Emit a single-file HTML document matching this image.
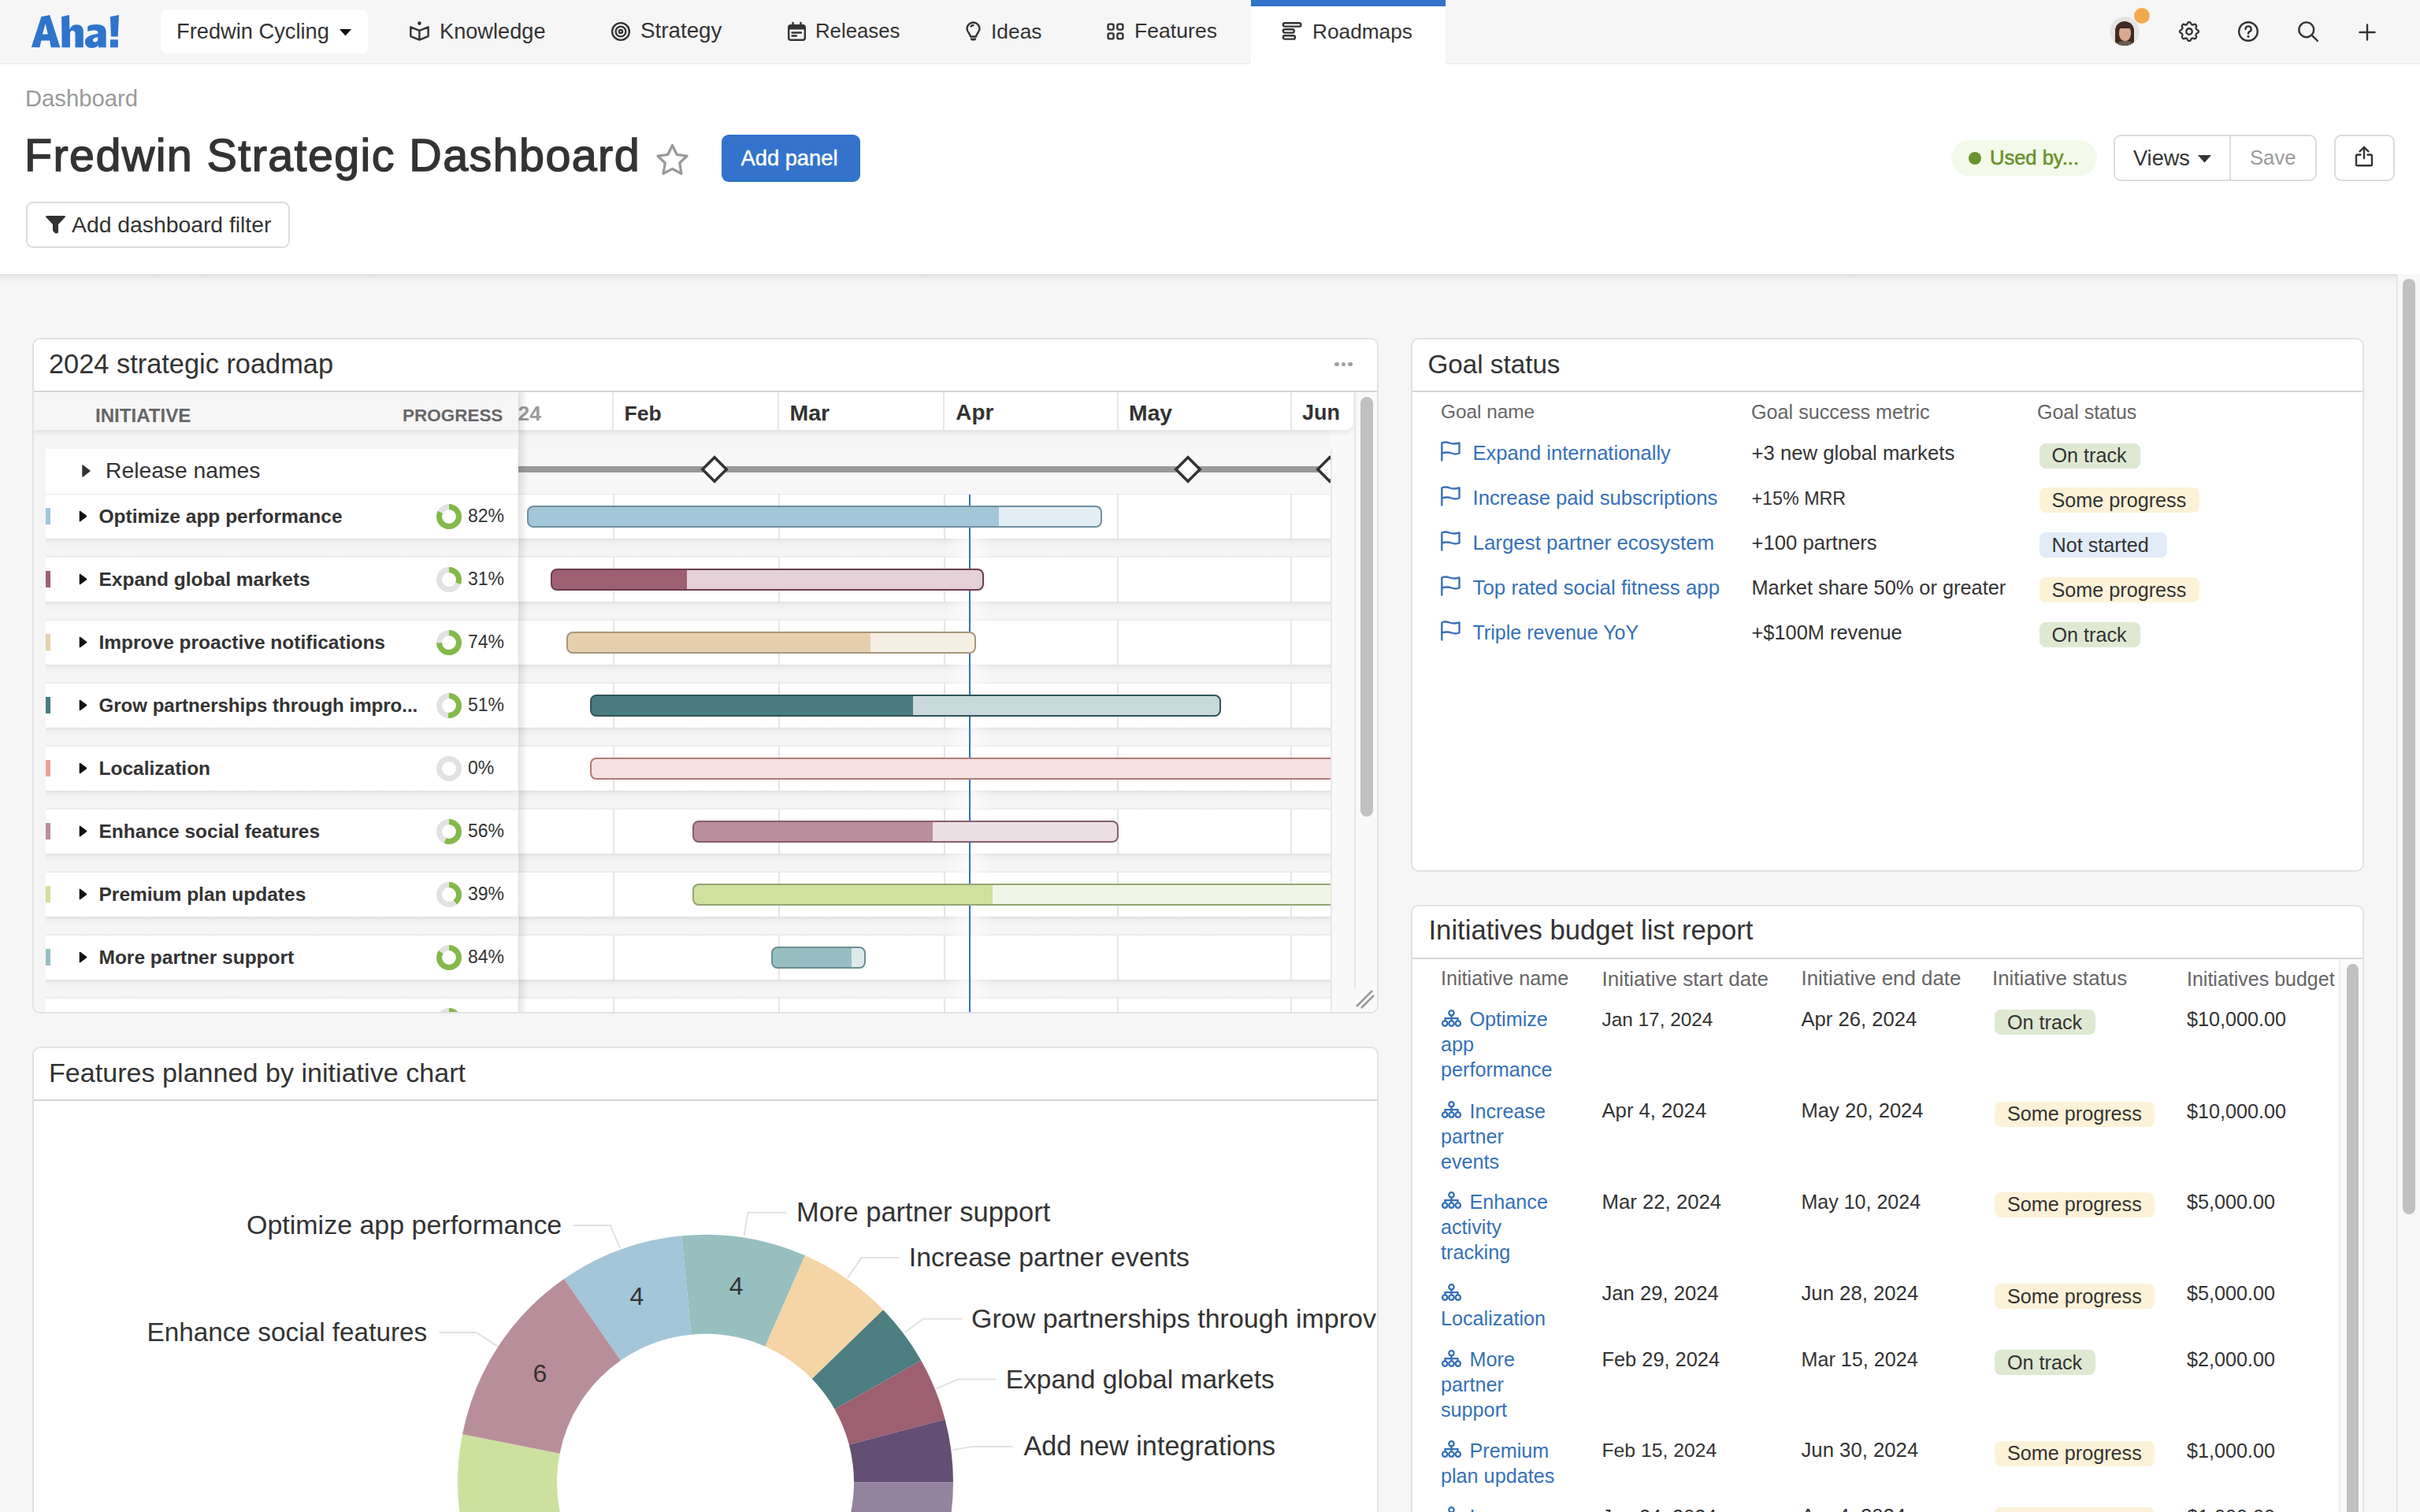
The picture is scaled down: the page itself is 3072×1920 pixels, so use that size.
<!DOCTYPE html>
<html><head><meta charset="utf-8"><title>Fredwin Strategic Dashboard</title>
<style>
html,body{margin:0;padding:0}
body{width:3072px;height:1920px;overflow:hidden;position:relative;background:#f6f6f6;font-family:'Liberation Sans', sans-serif;color:#333}
.a{position:absolute;box-sizing:border-box}
.t{position:absolute;white-space:nowrap;line-height:1}
.clip{position:absolute;overflow:hidden}
svg{position:absolute;overflow:visible}
</style></head><body>
<div class="a" style="left:0;top:0;width:3072px;height:81px;background:#f6f6f6;border-bottom:1px solid #ececec"></div>
<svg style="left:0;top:0" width="170" height="70" viewBox="0 0 170 70"><path fill="#2f74cc" fill-rule="evenodd" d="M39.8 60 L52.4 21.2 L63.2 19 L76.4 60.2 L64.8 60.2 L63 51.4 L52.4 51.4 L50.4 60.2 Z M53.9 43.4 L57.6 30.2 L60.8 43.4 Z M78.1 21.2 L88 19 L88.3 37.6 C90.2 33.2 93.2 31.2 97.2 31.2 C102.5 31.2 105.8 34.5 105.8 39.5 L105.8 60.3 L95.5 60.3 L95.5 43.2 C95.5 40.6 94.2 38.8 92.2 38.8 C90.2 38.8 88.9 40.4 88.9 43 L88.9 60.2 L78.6 60.2 Z M111.2 33.4 C114.3 31.9 118.4 31.1 122.4 31.1 C130.2 31.1 134.6 34.2 134.6 40.2 L134.6 60.3 L124.9 60.3 L124.9 57.5 C123 59.8 120.2 60.9 116.6 60.9 C111.2 60.9 108 57.7 108 53.2 C108 47.2 113.2 44.6 124.3 42.8 L124.3 41.4 C124.3 39.4 123 38.5 120.4 38.5 C117.2 38.5 114.2 39.1 111.2 39.9 Z M124.3 47.2 C119.8 47.9 117.9 49 117.9 51.1 C117.9 52.6 118.9 53.4 120.4 53.4 C122.6 53.4 124.3 52 124.3 49.8 Z M139.9 21.2 L151 19 L149.7 46.5 L141 46.5 Z M140 50.2 H149.8 V60.3 H140 Z"/></svg>
<div class="a" style="left:204px;top:12px;width:263px;height:56px;background:#fff;border-radius:8px"></div>
<div class="t" style="left:224.0px;top:26.11px;font-size:27.27px;font-weight:400;color:#333;">Fredwin Cycling</div>
<svg style="left:431px;top:37px" width="15" height="9" viewBox="0 0 15 9"><path d="M0 0H15L7.5 8.5Z" fill="#111"/></svg>
<svg style="left:520px;top:27px" width="25" height="25" viewBox="0 0 25 25"><circle cx="12.4" cy="2.6" r="2.3" fill="#333"/><path d="M1.3 7.3 L12.4 11.8 L23.6 7.3 V19.1 L12.4 23.6 L1.3 19.1 Z M12.4 11.8 V23.6" fill="none" stroke="#333" stroke-width="2.4" stroke-linecap="round" stroke-linejoin="round" stroke-width="2.3"/></svg>
<div class="t" style="left:558.0px;top:25.97px;font-size:27.20px;font-weight:400;color:#333;">Knowledge</div>
<svg style="left:776px;top:28px" width="24" height="24" viewBox="0 0 24 24"><circle cx="12" cy="12" r="10.9" fill="none" stroke="#333" stroke-width="2.4" stroke-linecap="round" stroke-linejoin="round" stroke-width="2.2"/><circle cx="12" cy="12" r="6.4" fill="none" stroke="#333" stroke-width="2.4" stroke-linecap="round" stroke-linejoin="round" stroke-width="2.2"/><circle cx="12" cy="12" r="2.1" fill="none" stroke="#333" stroke-width="2.4" stroke-linecap="round" stroke-linejoin="round" stroke-width="2"/></svg>
<div class="t" style="left:813.0px;top:25.47px;font-size:27.79px;font-weight:400;color:#333;">Strategy</div>
<svg style="left:1000px;top:28px" width="23" height="24" viewBox="0 0 23 24"><path d="M6.5 1V5 M16.5 1V5" fill="none" stroke="#333" stroke-width="2.4" stroke-linecap="round" stroke-linejoin="round"/><rect x="1.2" y="4.2" width="20.6" height="18.6" rx="2.5" fill="none" stroke="#333" stroke-width="2.4" stroke-linecap="round" stroke-linejoin="round"/><path d="M1.2 6.5 Q1.2 4.2 3.7 4.2 H19.3 Q21.8 4.2 21.8 6.7 V9.5 H1.2Z" fill="#333"/><path d="M5.5 13.5H17 M5.5 17.5H11" fill="none" stroke="#333" stroke-width="2.4" stroke-linecap="round" stroke-linejoin="round"/></svg>
<div class="t" style="left:1035.0px;top:27.17px;font-size:25.79px;font-weight:400;color:#333;">Releases</div>
<svg style="left:1226px;top:28px" width="19" height="24" viewBox="0 0 19 24"><path d="M6 18.5 C6 15 1.5 13 1.5 8.5 A8 8 0 0 1 17.5 8.5 C17.5 13 13 15 13 18.5 Z" fill="none" stroke="#333" stroke-width="2.4" stroke-linecap="round" stroke-linejoin="round"/><path d="M6 20.5H13 V21.5 Q13 23.5 11 23.5 H8 Q6 23.5 6 21.5Z" fill="#333"/><path d="M6.5 5.5 Q8 4 9.5 4" fill="none" stroke="#333" stroke-width="2.4" stroke-linecap="round" stroke-linejoin="round" stroke-width="1.8"/></svg>
<div class="t" style="left:1258.0px;top:26.68px;font-size:26.37px;font-weight:400;color:#333;">Ideas</div>
<svg style="left:1405px;top:29px" width="23" height="23" viewBox="0 0 23 23"><rect x="1.6" y="1.6" width="7" height="7" rx="1.8" fill="none" stroke="#333" stroke-width="2.4" stroke-linecap="round" stroke-linejoin="round" stroke-width="2.2"/><rect x="13.4" y="1.6" width="7" height="7" rx="1.8" fill="none" stroke="#333" stroke-width="2.4" stroke-linecap="round" stroke-linejoin="round" stroke-width="2.2"/><rect x="1.6" y="13.4" width="7" height="7" rx="1.8" fill="none" stroke="#333" stroke-width="2.4" stroke-linecap="round" stroke-linejoin="round" stroke-width="2.2"/><rect x="13.4" y="13.4" width="7" height="7" rx="1.8" fill="none" stroke="#333" stroke-width="2.4" stroke-linecap="round" stroke-linejoin="round" stroke-width="2.2"/></svg>
<div class="t" style="left:1440.0px;top:26.48px;font-size:26.61px;font-weight:400;color:#333;">Features</div>
<div class="a" style="left:1588px;top:0;width:247px;height:82px;background:#fff"></div>
<div class="a" style="left:1588px;top:0;width:247px;height:8px;background:#3073c9"></div>
<svg style="left:1627px;top:27px" width="26" height="25" viewBox="0 0 26 25"><rect x="1.8" y="2.2" width="22.6" height="4.4" rx="2.2" fill="none" stroke="#333" stroke-width="2.4" stroke-linecap="round" stroke-linejoin="round" stroke-width="2.2"/><rect x="1.8" y="10.2" width="14" height="4.4" rx="2.2" fill="none" stroke="#333" stroke-width="2.4" stroke-linecap="round" stroke-linejoin="round" stroke-width="2.2"/><rect x="1.8" y="18.2" width="15.2" height="4.4" rx="2.2" fill="none" stroke="#333" stroke-width="2.4" stroke-linecap="round" stroke-linejoin="round" stroke-width="2.2"/></svg>
<div class="t" style="left:1666.0px;top:26.77px;font-size:26.26px;font-weight:400;color:#333;">Roadmaps</div>
<div class="a" style="left:2679px;top:22px;width:36px;height:36px;border-radius:50%;overflow:hidden;background:#e6e4e0;box-shadow:0 0 0 1px #e8e8e8"><div class="a" style="left:6px;top:5px;width:24px;height:34px;border-radius:12px 12px 4px 4px;background:#3d2b22"></div><div class="a" style="left:11px;top:10px;width:15px;height:20px;border-radius:48% 48% 45% 45%;background:#d9a88f"></div><div class="a" style="left:10px;top:7px;width:17px;height:7px;border-radius:8px 8px 2px 6px;background:#3d2b22"></div><div class="a" style="left:6px;top:30px;width:26px;height:10px;border-radius:10px 10px 0 0;background:#6b5a50"></div></div>
<div class="a" style="left:2709px;top:10px;width:20px;height:20px;border-radius:50%;background:#f2a94e"></div>
<svg style="left:2763px;top:24px" width="32" height="32" viewBox="0 0 24 24"><path d="M10.325 4.317c.426-1.756 2.924-1.756 3.35 0a1.724 1.724 0 0 0 2.573 1.066c1.543-.94 3.31.826 2.37 2.37a1.724 1.724 0 0 0 1.065 2.572c1.756.426 1.756 2.924 0 3.35a1.724 1.724 0 0 0-1.066 2.573c.94 1.543-.826 3.31-2.37 2.37a1.724 1.724 0 0 0-2.572 1.065c-.426 1.756-2.924 1.756-3.35 0a1.724 1.724 0 0 0-2.573-1.066c-1.543.94-3.31-.826-2.37-2.37a1.724 1.724 0 0 0-1.065-2.572c-1.756-.426-1.756-2.924 0-3.35a1.724 1.724 0 0 0 1.066-2.573c-.94-1.543.826-3.31 2.37-2.37c1 .608 2.296.07 2.572-1.065z" fill="none" stroke="#333" stroke-width="1.75" stroke-linecap="round" stroke-linejoin="round"/><circle cx="12" cy="12" r="2.8" fill="none" stroke="#333" stroke-width="1.75"/></svg>
<svg style="left:2841px;top:27px" width="26" height="26" viewBox="0 0 26 26"><circle cx="13" cy="13" r="11.8" fill="none" stroke="#333" stroke-width="2.4" stroke-linecap="round" stroke-linejoin="round"/><path d="M9.5 10 A3.6 3.6 0 1 1 14.2 13.4 Q13 14 13 15.6" fill="none" stroke="#333" stroke-width="2.4" stroke-linecap="round" stroke-linejoin="round"/><circle cx="13" cy="19.3" r="1.5" fill="#333"/></svg>
<svg style="left:2917px;top:27px" width="27" height="27" viewBox="0 0 27 27"><circle cx="10.8" cy="10.8" r="9.4" fill="none" stroke="#333" stroke-width="2.4" stroke-linecap="round" stroke-linejoin="round"/><path d="M17.8 17.8 L25 25" fill="none" stroke="#333" stroke-width="2.4" stroke-linecap="round" stroke-linejoin="round"/></svg>
<svg style="left:2994px;top:30px" width="22" height="22" viewBox="0 0 22 22"><path d="M11 1.5V20.5 M1.5 11H20.5" fill="none" stroke="#333" stroke-width="2.4" stroke-linecap="round" stroke-linejoin="round"/></svg>
<div class="a" style="left:0;top:82px;width:3072px;height:266px;background:#fff"></div>
<div class="a" style="left:0;top:348px;width:3072px;height:14px;background:linear-gradient(#dedede,#efefef 40%,#f6f6f6)"></div>
<div class="t" style="left:32.0px;top:111.06px;font-size:29.23px;font-weight:400;color:#9a9a9a;">Dashboard</div>
<div class="t" style="left:31.0px;top:168.83px;font-size:57.50px;font-weight:400;color:#333;-webkit-text-stroke:1.4px #333;letter-spacing:1.383px">Fredwin Strategic Dashboard</div>
<svg style="left:832px;top:182px" width="43" height="42" viewBox="0 0 43 42"><path d="M21.5 2.5 L27.2 14.3 L40 16 L30.7 25 L33 38.5 L21.5 32.3 L10 38.5 L12.3 25 L3 16 L15.8 14.3 Z" fill="none" stroke="#999" stroke-width="3.2" stroke-linejoin="round"/></svg>
<div class="a" style="left:916px;top:171px;width:176px;height:60px;background:#3373cc;border-radius:9px"></div>
<div class="t" style="left:940.5px;top:187.48px;font-size:27.31px;font-weight:400;color:#fff;-webkit-text-stroke:0.5px #fff">Add panel</div>
<div class="a" style="left:33px;top:256px;width:335px;height:59px;border:2px solid #dcdcdc;border-radius:9px;background:#fff"></div>
<svg style="left:57px;top:274px" width="27" height="23" viewBox="0 0 27 23"><path d="M1 1.5 Q0.5 0 2.5 0 H24.5 Q26.5 0 26 1.5 L17 11 V20.5 Q17 22.5 15 22.5 Q12.5 22.5 12 21 L10.5 19.5 Q10 19 10 18 V11 Z" fill="#333"/></svg>
<div class="t" style="left:91.0px;top:270.82px;font-size:28.32px;font-weight:400;color:#333;">Add dashboard filter</div>
<div class="a" style="left:2477px;top:178px;width:185px;height:46px;border-radius:23px;background:#f4faea"></div>
<div class="a" style="left:2499px;top:193px;width:16px;height:16px;border-radius:50%;background:#6a922e"></div>
<div class="t" style="left:2526.0px;top:187.90px;font-size:25.52px;font-weight:400;color:#6a922e;-webkit-text-stroke:0.6px #6a922e">Used by...</div>
<div class="a" style="left:2683px;top:171px;width:258px;height:59px;border:2px solid #dcdcdc;border-radius:9px;background:#fff"></div>
<div class="a" style="left:2830px;top:172px;width:2px;height:57px;background:#dcdcdc"></div>
<div class="t" style="left:2708.0px;top:187.00px;font-size:27.17px;font-weight:400;color:#333;">Views</div>
<svg style="left:2790px;top:197px" width="17" height="10" viewBox="0 0 17 10"><path d="M0 0H17L8.5 9.5Z" fill="#333"/></svg>
<div class="t" style="left:2856.0px;top:188.27px;font-size:25.66px;font-weight:400;color:#9a9a9a;">Save</div>
<div class="a" style="left:2963px;top:171px;width:77px;height:59px;border:2px solid #dcdcdc;border-radius:9px;background:#fff"></div>
<svg style="left:2989px;top:185px" width="24" height="27" viewBox="0 0 24 27"><path d="M12 2V16 M6.5 7.3 L12 1.8 L17.5 7.3 M7.5 11.5 H3.5 Q2 11.5 2 13 V23.8 Q2 25.2 3.5 25.2 H20.5 Q22 25.2 22 23.8 V13 Q22 11.5 20.5 11.5 H16.5" fill="none" stroke="#333" stroke-width="2.4" stroke-linecap="round" stroke-linejoin="round" stroke-width="2.5"/></svg>
<div class="a" style="left:3042px;top:348px;width:30px;height:1572px;background:#f8f8f8;border-left:2px solid #e6e6e6"></div>
<div class="a" style="left:3050px;top:354px;width:16px;height:1188px;background:#c1c1c1;border-radius:8px"></div>
<div class="a" style="left:41px;top:429px;width:1709px;height:858px;background:#fff;border:2px solid #e2e2e2;border-radius:10px"></div>
<div class="t" style="left:62.0px;top:445.41px;font-size:34.36px;font-weight:400;color:#333;">2024 strategic roadmap</div>
<div class="a" style="left:1694.4px;top:460px;width:5.2px;height:5.2px;border-radius:50%;background:#a0a0a0"></div>
<div class="a" style="left:1702.9px;top:460px;width:5.2px;height:5.2px;border-radius:50%;background:#a0a0a0"></div>
<div class="a" style="left:1711.4px;top:460px;width:5.2px;height:5.2px;border-radius:50%;background:#a0a0a0"></div>
<div class="a" style="left:43px;top:496px;width:1705px;height:2px;background:#d6d6d6"></div>
<div class="clip" style="left:43px;top:498px;width:1705px;height:787px;border-radius:0 0 8px 8px">
<div class="a" style="left:0.0px;top:0.0px;width:1646.0px;height:802.0px;background:#f5f5f5"></div>
<div class="a" style="left:1646.0px;top:0.0px;width:61.0px;height:802.0px;background:#f9f9f9"></div>
<div class="a" style="left:615.0px;top:130.0px;width:1031.0px;height:56.0px;background:#fff"></div>
<div class="a" style="left:615.0px;top:186.0px;width:1031.0px;height:24.0px;background:linear-gradient(#dedede 0,#e9e9e9 2px,#f1f1f1 6px,#f5f5f5 12px,#f5f5f5 21px,#ededed 23px,#e6e6e6 24px)"></div>
<div class="a" style="left:735.3px;top:130.0px;width:2.0px;height:56.0px;background:#e6e6e6"></div>
<div class="a" style="left:945.3px;top:130.0px;width:2.0px;height:56.0px;background:#e6e6e6"></div>
<div class="a" style="left:1155.3px;top:130.0px;width:2.0px;height:56.0px;background:#e6e6e6"></div>
<div class="a" style="left:1375.3px;top:130.0px;width:2.0px;height:56.0px;background:#e6e6e6"></div>
<div class="a" style="left:1595.3px;top:130.0px;width:2.0px;height:56.0px;background:#e6e6e6"></div>
<div class="a" style="left:615.0px;top:210.0px;width:1031.0px;height:56.0px;background:#fff"></div>
<div class="a" style="left:615.0px;top:266.0px;width:1031.0px;height:24.0px;background:linear-gradient(#dedede 0,#e9e9e9 2px,#f1f1f1 6px,#f5f5f5 12px,#f5f5f5 21px,#ededed 23px,#e6e6e6 24px)"></div>
<div class="a" style="left:735.3px;top:210.0px;width:2.0px;height:56.0px;background:#e6e6e6"></div>
<div class="a" style="left:945.3px;top:210.0px;width:2.0px;height:56.0px;background:#e6e6e6"></div>
<div class="a" style="left:1155.3px;top:210.0px;width:2.0px;height:56.0px;background:#e6e6e6"></div>
<div class="a" style="left:1375.3px;top:210.0px;width:2.0px;height:56.0px;background:#e6e6e6"></div>
<div class="a" style="left:1595.3px;top:210.0px;width:2.0px;height:56.0px;background:#e6e6e6"></div>
<div class="a" style="left:615.0px;top:290.0px;width:1031.0px;height:56.0px;background:#fff"></div>
<div class="a" style="left:615.0px;top:346.0px;width:1031.0px;height:24.0px;background:linear-gradient(#dedede 0,#e9e9e9 2px,#f1f1f1 6px,#f5f5f5 12px,#f5f5f5 21px,#ededed 23px,#e6e6e6 24px)"></div>
<div class="a" style="left:735.3px;top:290.0px;width:2.0px;height:56.0px;background:#e6e6e6"></div>
<div class="a" style="left:945.3px;top:290.0px;width:2.0px;height:56.0px;background:#e6e6e6"></div>
<div class="a" style="left:1155.3px;top:290.0px;width:2.0px;height:56.0px;background:#e6e6e6"></div>
<div class="a" style="left:1375.3px;top:290.0px;width:2.0px;height:56.0px;background:#e6e6e6"></div>
<div class="a" style="left:1595.3px;top:290.0px;width:2.0px;height:56.0px;background:#e6e6e6"></div>
<div class="a" style="left:615.0px;top:370.0px;width:1031.0px;height:56.0px;background:#fff"></div>
<div class="a" style="left:615.0px;top:426.0px;width:1031.0px;height:24.0px;background:linear-gradient(#dedede 0,#e9e9e9 2px,#f1f1f1 6px,#f5f5f5 12px,#f5f5f5 21px,#ededed 23px,#e6e6e6 24px)"></div>
<div class="a" style="left:735.3px;top:370.0px;width:2.0px;height:56.0px;background:#e6e6e6"></div>
<div class="a" style="left:945.3px;top:370.0px;width:2.0px;height:56.0px;background:#e6e6e6"></div>
<div class="a" style="left:1155.3px;top:370.0px;width:2.0px;height:56.0px;background:#e6e6e6"></div>
<div class="a" style="left:1375.3px;top:370.0px;width:2.0px;height:56.0px;background:#e6e6e6"></div>
<div class="a" style="left:1595.3px;top:370.0px;width:2.0px;height:56.0px;background:#e6e6e6"></div>
<div class="a" style="left:615.0px;top:450.0px;width:1031.0px;height:56.0px;background:#fff"></div>
<div class="a" style="left:615.0px;top:506.0px;width:1031.0px;height:24.0px;background:linear-gradient(#dedede 0,#e9e9e9 2px,#f1f1f1 6px,#f5f5f5 12px,#f5f5f5 21px,#ededed 23px,#e6e6e6 24px)"></div>
<div class="a" style="left:735.3px;top:450.0px;width:2.0px;height:56.0px;background:#e6e6e6"></div>
<div class="a" style="left:945.3px;top:450.0px;width:2.0px;height:56.0px;background:#e6e6e6"></div>
<div class="a" style="left:1155.3px;top:450.0px;width:2.0px;height:56.0px;background:#e6e6e6"></div>
<div class="a" style="left:1375.3px;top:450.0px;width:2.0px;height:56.0px;background:#e6e6e6"></div>
<div class="a" style="left:1595.3px;top:450.0px;width:2.0px;height:56.0px;background:#e6e6e6"></div>
<div class="a" style="left:615.0px;top:530.0px;width:1031.0px;height:56.0px;background:#fff"></div>
<div class="a" style="left:615.0px;top:586.0px;width:1031.0px;height:24.0px;background:linear-gradient(#dedede 0,#e9e9e9 2px,#f1f1f1 6px,#f5f5f5 12px,#f5f5f5 21px,#ededed 23px,#e6e6e6 24px)"></div>
<div class="a" style="left:735.3px;top:530.0px;width:2.0px;height:56.0px;background:#e6e6e6"></div>
<div class="a" style="left:945.3px;top:530.0px;width:2.0px;height:56.0px;background:#e6e6e6"></div>
<div class="a" style="left:1155.3px;top:530.0px;width:2.0px;height:56.0px;background:#e6e6e6"></div>
<div class="a" style="left:1375.3px;top:530.0px;width:2.0px;height:56.0px;background:#e6e6e6"></div>
<div class="a" style="left:1595.3px;top:530.0px;width:2.0px;height:56.0px;background:#e6e6e6"></div>
<div class="a" style="left:615.0px;top:610.0px;width:1031.0px;height:56.0px;background:#fff"></div>
<div class="a" style="left:615.0px;top:666.0px;width:1031.0px;height:24.0px;background:linear-gradient(#dedede 0,#e9e9e9 2px,#f1f1f1 6px,#f5f5f5 12px,#f5f5f5 21px,#ededed 23px,#e6e6e6 24px)"></div>
<div class="a" style="left:735.3px;top:610.0px;width:2.0px;height:56.0px;background:#e6e6e6"></div>
<div class="a" style="left:945.3px;top:610.0px;width:2.0px;height:56.0px;background:#e6e6e6"></div>
<div class="a" style="left:1155.3px;top:610.0px;width:2.0px;height:56.0px;background:#e6e6e6"></div>
<div class="a" style="left:1375.3px;top:610.0px;width:2.0px;height:56.0px;background:#e6e6e6"></div>
<div class="a" style="left:1595.3px;top:610.0px;width:2.0px;height:56.0px;background:#e6e6e6"></div>
<div class="a" style="left:615.0px;top:690.0px;width:1031.0px;height:56.0px;background:#fff"></div>
<div class="a" style="left:615.0px;top:746.0px;width:1031.0px;height:24.0px;background:linear-gradient(#dedede 0,#e9e9e9 2px,#f1f1f1 6px,#f5f5f5 12px,#f5f5f5 21px,#ededed 23px,#e6e6e6 24px)"></div>
<div class="a" style="left:735.3px;top:690.0px;width:2.0px;height:56.0px;background:#e6e6e6"></div>
<div class="a" style="left:945.3px;top:690.0px;width:2.0px;height:56.0px;background:#e6e6e6"></div>
<div class="a" style="left:1155.3px;top:690.0px;width:2.0px;height:56.0px;background:#e6e6e6"></div>
<div class="a" style="left:1375.3px;top:690.0px;width:2.0px;height:56.0px;background:#e6e6e6"></div>
<div class="a" style="left:1595.3px;top:690.0px;width:2.0px;height:56.0px;background:#e6e6e6"></div>
<div class="a" style="left:615.0px;top:770.0px;width:1031.0px;height:56.0px;background:#fff"></div>
<div class="a" style="left:615.0px;top:826.0px;width:1031.0px;height:24.0px;background:linear-gradient(#dedede 0,#e9e9e9 2px,#f1f1f1 6px,#f5f5f5 12px,#f5f5f5 21px,#ededed 23px,#e6e6e6 24px)"></div>
<div class="a" style="left:735.3px;top:770.0px;width:2.0px;height:56.0px;background:#e6e6e6"></div>
<div class="a" style="left:945.3px;top:770.0px;width:2.0px;height:56.0px;background:#e6e6e6"></div>
<div class="a" style="left:1155.3px;top:770.0px;width:2.0px;height:56.0px;background:#e6e6e6"></div>
<div class="a" style="left:1375.3px;top:770.0px;width:2.0px;height:56.0px;background:#e6e6e6"></div>
<div class="a" style="left:1595.3px;top:770.0px;width:2.0px;height:56.0px;background:#e6e6e6"></div>
<div class="a" style="left:615.0px;top:72.0px;width:1031.0px;height:56.5px;background:#f7f7f7"></div>
<div class="a" style="left:15.0px;top:128.5px;width:1631.0px;height:1.5px;background:#e8e8e8"></div>
<div class="a" style="left:615.0px;top:94.0px;width:1031.0px;height:8.0px;background:#9a9a9a"></div>
<svg style="left:845.6px;top:80.0px" width="36" height="36" viewBox="0 0 36 36"><path d="M18 2.8 L33.2 18 L18 33.2 L2.8 18Z" fill="#fff" stroke="#333" stroke-width="3.6" stroke-linejoin="miter"/></svg>
<svg style="left:1447.0px;top:80.0px" width="36" height="36" viewBox="0 0 36 36"><path d="M18 2.8 L33.2 18 L18 33.2 L2.8 18Z" fill="#fff" stroke="#333" stroke-width="3.6" stroke-linejoin="miter"/></svg>
<svg style="left:1627.0px;top:80.0px" width="36" height="36" viewBox="0 0 36 36"><path d="M18 2.8 L33.2 18 L18 33.2 L2.8 18Z" fill="#fff" stroke="#333" stroke-width="3.6" stroke-linejoin="miter"/></svg>
<div class="a" style="left:1646.0px;top:72.0px;width:61.0px;height:70.0px;background:#f9f9f9"></div>
<div class="a" style="left:1157.0px;top:130.0px;width:60.0px;height:672.0px;background:linear-gradient(90deg,rgba(255,255,255,0),rgba(255,255,255,0.55) 40%,rgba(255,255,255,0.55) 60%,rgba(255,255,255,0))"></div>
<div class="a" style="left:1187.0px;top:130.0px;width:2.0px;height:672.0px;background:#3570c2"></div>
<div class="a" style="left:626.3px;top:144.0px;width:730.0px;height:28px;border:2px solid #6f8fa0;border-radius:8px;background:linear-gradient(90deg,#a3c6d8 0,#a3c6d8 597.4px,#e3eef4 597.4px)"></div>
<div class="a" style="left:656.3px;top:224.0px;width:549.7px;height:28px;border:2px solid #6d3e4e;border-radius:8px;background:linear-gradient(90deg,#9e5f73 0,#9e5f73 170.7px,#e4d0d7 170.7px)"></div>
<div class="a" style="left:675.8px;top:304.0px;width:520.6px;height:28px;border:2px solid #a8977c;border-radius:8px;background:linear-gradient(90deg,#e6cfad 0,#e6cfad 384.2px,#f5eee3 384.2px)"></div>
<div class="a" style="left:706.0px;top:384.0px;width:801.0px;height:28px;border:2px solid #2f5559;border-radius:8px;background:linear-gradient(90deg,#4a7b80 0,#4a7b80 408.0px,#c9d9db 408.0px)"></div>
<div class="a" style="left:706.0px;top:464.0px;width:940.0px;height:28px;border:2px solid #b07b78;border-right:none;border-radius:8px 0 0 8px;background:linear-gradient(90deg,#e9a39a 0,#e9a39a 0.0px,#f6e2e2 0.0px)"></div>
<div class="a" style="left:836.4px;top:544.0px;width:540.3px;height:28px;border:2px solid #86606c;border-radius:8px;background:linear-gradient(90deg,#ba8e9c 0,#ba8e9c 302.6px,#ecdfe4 302.6px)"></div>
<div class="a" style="left:836.4px;top:624.0px;width:809.6px;height:28px;border:2px solid #95a677;border-right:none;border-radius:8px 0 0 8px;background:linear-gradient(90deg,#cfe19d 0,#cfe19d 378.6px,#f1f5e5 378.6px)"></div>
<div class="a" style="left:936.4px;top:704.0px;width:119.2px;height:28px;border:2px solid #6b8f92;border-radius:8px;background:linear-gradient(90deg,#97bec2 0,#97bec2 99.6px,#ddeaeb 99.6px)"></div>
<div class="a" style="left:615.0px;top:0.0px;width:1060.0px;height:48.0px;background:#fff;border-radius:0 0 10px 0;box-shadow:0 3px 6px rgba(0,0,0,0.09)"></div>
<div class="a" style="left:734.2px;top:0.0px;width:2.0px;height:48.0px;background:#e8e8e8"></div>
<div class="a" style="left:944.2px;top:0.0px;width:2.0px;height:48.0px;background:#e8e8e8"></div>
<div class="a" style="left:1154.2px;top:0.0px;width:2.0px;height:48.0px;background:#e8e8e8"></div>
<div class="a" style="left:1374.5px;top:0.0px;width:2.0px;height:48.0px;background:#e8e8e8"></div>
<div class="a" style="left:1594.5px;top:0.0px;width:2.0px;height:48.0px;background:#e8e8e8"></div>
<div class="t" style="left:585.0px;top:13.57px;font-size:26.50px;font-weight:700;color:#9a9a9a;">2024</div>
<div class="t" style="left:749.5px;top:13.53px;font-size:26.55px;font-weight:700;color:#333;">Feb</div>
<div class="t" style="left:959.5px;top:11.87px;font-size:28.51px;font-weight:700;color:#333;">Mar</div>
<div class="t" style="left:1170.3px;top:12.41px;font-size:27.87px;font-weight:700;color:#333;">Apr</div>
<div class="t" style="left:1390.1px;top:12.07px;font-size:28.27px;font-weight:700;color:#333;">May</div>
<div class="t" style="left:1610.1px;top:13.15px;font-size:27.00px;font-weight:700;color:#333;">Jun</div>
<div class="a" style="left:0.0px;top:0.0px;width:615.0px;height:802.0px;background:#f5f5f5"></div>
<div class="a" style="left:615.0px;top:0.0px;width:12.0px;height:802.0px;background:linear-gradient(90deg,rgba(0,0,0,0.10),rgba(0,0,0,0))"></div>
<div class="a" style="left:0.0px;top:0.0px;width:615.0px;height:48.0px;background:#f6f6f6;box-shadow:0 3px 6px rgba(0,0,0,0.09)"></div>
<div class="t" style="left:78.0px;top:17.60px;font-size:24.10px;font-weight:700;color:#666;">INITIATIVE</div>
<div class="t" style="left:468.0px;top:18.97px;font-size:22.48px;font-weight:700;color:#666;">PROGRESS</div>
<div class="a" style="left:15.0px;top:72.0px;width:599.0px;height:56.5px;background:#fff"></div>
<svg style="left:61px;top:92px" width="11" height="16" viewBox="0 0 11 16"><path d="M1 1 L10 8 L1 15Z" fill="#333" stroke="#333" stroke-width="1.5" stroke-linejoin="round"/></svg>
<div class="t" style="left:91.0px;top:84.87px;font-size:28.27px;font-weight:400;color:#333;">Release names</div>
<div class="a" style="left:15.0px;top:128.5px;width:599.0px;height:1.5px;background:#e8e8e8"></div>
<div class="a" style="left:15.0px;top:130.0px;width:599.0px;height:56.0px;background:#fff"></div>
<div class="a" style="left:15.0px;top:186.0px;width:599.0px;height:24.0px;background:linear-gradient(#dedede 0,#e9e9e9 2px,#f1f1f1 6px,#f5f5f5 12px,#f5f5f5 21px,#ededed 23px,#e6e6e6 24px)"></div>
<div class="a" style="left:15.0px;top:147.3px;width:6.0px;height:21.2px;background:#a3c6d8"></div>
<svg style="left:57px;top:150px" width="11" height="16" viewBox="0 0 11 16"><path d="M1.5 1.5 L9.5 7.5 L1.5 13.5Z" fill="#111" stroke="#111" stroke-width="1.6" stroke-linejoin="round"/></svg>
<div class="t" style="left:82.5px;top:145.76px;font-size:24.50px;font-weight:700;color:#333;">Optimize app performance</div>
<svg style="left:511px;top:142px" width="32" height="32" viewBox="0 0 32 32"><circle cx="16" cy="16" r="12.5" fill="none" stroke="#e2e2e2" stroke-width="7"/><circle cx="16" cy="16" r="12.5" fill="none" stroke="#84b94a" stroke-width="7" stroke-dasharray="64.40 78.54" transform="rotate(-90 16 16)"/></svg>
<div class="t" style="left:551.0px;top:146.13px;font-size:23.00px;font-weight:400;color:#333;">82%</div>
<div class="a" style="left:15.0px;top:210.0px;width:599.0px;height:56.0px;background:#fff"></div>
<div class="a" style="left:15.0px;top:266.0px;width:599.0px;height:24.0px;background:linear-gradient(#dedede 0,#e9e9e9 2px,#f1f1f1 6px,#f5f5f5 12px,#f5f5f5 21px,#ededed 23px,#e6e6e6 24px)"></div>
<div class="a" style="left:15.0px;top:227.3px;width:6.0px;height:21.2px;background:#9e5f73"></div>
<svg style="left:57px;top:230px" width="11" height="16" viewBox="0 0 11 16"><path d="M1.5 1.5 L9.5 7.5 L1.5 13.5Z" fill="#111" stroke="#111" stroke-width="1.6" stroke-linejoin="round"/></svg>
<div class="t" style="left:82.5px;top:225.76px;font-size:24.50px;font-weight:700;color:#333;">Expand global markets</div>
<svg style="left:511px;top:222px" width="32" height="32" viewBox="0 0 32 32"><circle cx="16" cy="16" r="12.5" fill="none" stroke="#e2e2e2" stroke-width="7"/><circle cx="16" cy="16" r="12.5" fill="none" stroke="#84b94a" stroke-width="7" stroke-dasharray="24.35 78.54" transform="rotate(-90 16 16)"/></svg>
<div class="t" style="left:551.0px;top:226.13px;font-size:23.00px;font-weight:400;color:#333;">31%</div>
<div class="a" style="left:15.0px;top:290.0px;width:599.0px;height:56.0px;background:#fff"></div>
<div class="a" style="left:15.0px;top:346.0px;width:599.0px;height:24.0px;background:linear-gradient(#dedede 0,#e9e9e9 2px,#f1f1f1 6px,#f5f5f5 12px,#f5f5f5 21px,#ededed 23px,#e6e6e6 24px)"></div>
<div class="a" style="left:15.0px;top:307.3px;width:6.0px;height:21.2px;background:#e6cfad"></div>
<svg style="left:57px;top:310px" width="11" height="16" viewBox="0 0 11 16"><path d="M1.5 1.5 L9.5 7.5 L1.5 13.5Z" fill="#111" stroke="#111" stroke-width="1.6" stroke-linejoin="round"/></svg>
<div class="t" style="left:82.5px;top:305.76px;font-size:24.50px;font-weight:700;color:#333;">Improve proactive notifications</div>
<svg style="left:511px;top:302px" width="32" height="32" viewBox="0 0 32 32"><circle cx="16" cy="16" r="12.5" fill="none" stroke="#e2e2e2" stroke-width="7"/><circle cx="16" cy="16" r="12.5" fill="none" stroke="#84b94a" stroke-width="7" stroke-dasharray="58.12 78.54" transform="rotate(-90 16 16)"/></svg>
<div class="t" style="left:551.0px;top:306.13px;font-size:23.00px;font-weight:400;color:#333;">74%</div>
<div class="a" style="left:15.0px;top:370.0px;width:599.0px;height:56.0px;background:#fff"></div>
<div class="a" style="left:15.0px;top:426.0px;width:599.0px;height:24.0px;background:linear-gradient(#dedede 0,#e9e9e9 2px,#f1f1f1 6px,#f5f5f5 12px,#f5f5f5 21px,#ededed 23px,#e6e6e6 24px)"></div>
<div class="a" style="left:15.0px;top:387.3px;width:6.0px;height:21.2px;background:#4a7b80"></div>
<svg style="left:57px;top:390px" width="11" height="16" viewBox="0 0 11 16"><path d="M1.5 1.5 L9.5 7.5 L1.5 13.5Z" fill="#111" stroke="#111" stroke-width="1.6" stroke-linejoin="round"/></svg>
<div class="t" style="left:82.5px;top:386.13px;font-size:24.06px;font-weight:700;color:#333;">Grow partnerships through impro...</div>
<svg style="left:511px;top:382px" width="32" height="32" viewBox="0 0 32 32"><circle cx="16" cy="16" r="12.5" fill="none" stroke="#e2e2e2" stroke-width="7"/><circle cx="16" cy="16" r="12.5" fill="none" stroke="#84b94a" stroke-width="7" stroke-dasharray="40.06 78.54" transform="rotate(-90 16 16)"/></svg>
<div class="t" style="left:551.0px;top:386.13px;font-size:23.00px;font-weight:400;color:#333;">51%</div>
<div class="a" style="left:15.0px;top:450.0px;width:599.0px;height:56.0px;background:#fff"></div>
<div class="a" style="left:15.0px;top:506.0px;width:599.0px;height:24.0px;background:linear-gradient(#dedede 0,#e9e9e9 2px,#f1f1f1 6px,#f5f5f5 12px,#f5f5f5 21px,#ededed 23px,#e6e6e6 24px)"></div>
<div class="a" style="left:15.0px;top:467.3px;width:6.0px;height:21.2px;background:#e9a39a"></div>
<svg style="left:57px;top:470px" width="11" height="16" viewBox="0 0 11 16"><path d="M1.5 1.5 L9.5 7.5 L1.5 13.5Z" fill="#111" stroke="#111" stroke-width="1.6" stroke-linejoin="round"/></svg>
<div class="t" style="left:82.5px;top:465.76px;font-size:24.50px;font-weight:700;color:#333;">Localization</div>
<svg style="left:511px;top:462px" width="32" height="32" viewBox="0 0 32 32"><circle cx="16" cy="16" r="12.5" fill="none" stroke="#e2e2e2" stroke-width="7"/><circle cx="16" cy="16" r="12.5" fill="none" stroke="#84b94a" stroke-width="7" stroke-dasharray="0.00 78.54" transform="rotate(-90 16 16)"/></svg>
<div class="t" style="left:551.0px;top:466.13px;font-size:23.00px;font-weight:400;color:#333;">0%</div>
<div class="a" style="left:15.0px;top:530.0px;width:599.0px;height:56.0px;background:#fff"></div>
<div class="a" style="left:15.0px;top:586.0px;width:599.0px;height:24.0px;background:linear-gradient(#dedede 0,#e9e9e9 2px,#f1f1f1 6px,#f5f5f5 12px,#f5f5f5 21px,#ededed 23px,#e6e6e6 24px)"></div>
<div class="a" style="left:15.0px;top:547.3px;width:6.0px;height:21.2px;background:#ba8e9c"></div>
<svg style="left:57px;top:550px" width="11" height="16" viewBox="0 0 11 16"><path d="M1.5 1.5 L9.5 7.5 L1.5 13.5Z" fill="#111" stroke="#111" stroke-width="1.6" stroke-linejoin="round"/></svg>
<div class="t" style="left:82.5px;top:545.76px;font-size:24.50px;font-weight:700;color:#333;">Enhance social features</div>
<svg style="left:511px;top:542px" width="32" height="32" viewBox="0 0 32 32"><circle cx="16" cy="16" r="12.5" fill="none" stroke="#e2e2e2" stroke-width="7"/><circle cx="16" cy="16" r="12.5" fill="none" stroke="#84b94a" stroke-width="7" stroke-dasharray="43.98 78.54" transform="rotate(-90 16 16)"/></svg>
<div class="t" style="left:551.0px;top:546.13px;font-size:23.00px;font-weight:400;color:#333;">56%</div>
<div class="a" style="left:15.0px;top:610.0px;width:599.0px;height:56.0px;background:#fff"></div>
<div class="a" style="left:15.0px;top:666.0px;width:599.0px;height:24.0px;background:linear-gradient(#dedede 0,#e9e9e9 2px,#f1f1f1 6px,#f5f5f5 12px,#f5f5f5 21px,#ededed 23px,#e6e6e6 24px)"></div>
<div class="a" style="left:15.0px;top:627.3px;width:6.0px;height:21.2px;background:#cfe19d"></div>
<svg style="left:57px;top:630px" width="11" height="16" viewBox="0 0 11 16"><path d="M1.5 1.5 L9.5 7.5 L1.5 13.5Z" fill="#111" stroke="#111" stroke-width="1.6" stroke-linejoin="round"/></svg>
<div class="t" style="left:82.5px;top:625.76px;font-size:24.50px;font-weight:700;color:#333;">Premium plan updates</div>
<svg style="left:511px;top:622px" width="32" height="32" viewBox="0 0 32 32"><circle cx="16" cy="16" r="12.5" fill="none" stroke="#e2e2e2" stroke-width="7"/><circle cx="16" cy="16" r="12.5" fill="none" stroke="#84b94a" stroke-width="7" stroke-dasharray="30.63 78.54" transform="rotate(-90 16 16)"/></svg>
<div class="t" style="left:551.0px;top:626.13px;font-size:23.00px;font-weight:400;color:#333;">39%</div>
<div class="a" style="left:15.0px;top:690.0px;width:599.0px;height:56.0px;background:#fff"></div>
<div class="a" style="left:15.0px;top:746.0px;width:599.0px;height:24.0px;background:linear-gradient(#dedede 0,#e9e9e9 2px,#f1f1f1 6px,#f5f5f5 12px,#f5f5f5 21px,#ededed 23px,#e6e6e6 24px)"></div>
<div class="a" style="left:15.0px;top:707.3px;width:6.0px;height:21.2px;background:#97bec2"></div>
<svg style="left:57px;top:710px" width="11" height="16" viewBox="0 0 11 16"><path d="M1.5 1.5 L9.5 7.5 L1.5 13.5Z" fill="#111" stroke="#111" stroke-width="1.6" stroke-linejoin="round"/></svg>
<div class="t" style="left:82.5px;top:705.76px;font-size:24.50px;font-weight:700;color:#333;">More partner support</div>
<svg style="left:511px;top:702px" width="32" height="32" viewBox="0 0 32 32"><circle cx="16" cy="16" r="12.5" fill="none" stroke="#e2e2e2" stroke-width="7"/><circle cx="16" cy="16" r="12.5" fill="none" stroke="#84b94a" stroke-width="7" stroke-dasharray="65.97 78.54" transform="rotate(-90 16 16)"/></svg>
<div class="t" style="left:551.0px;top:706.13px;font-size:23.00px;font-weight:400;color:#333;">84%</div>
<div class="a" style="left:15.0px;top:770.0px;width:599.0px;height:56.0px;background:#fff"></div>
<div class="a" style="left:15.0px;top:826.0px;width:599.0px;height:24.0px;background:linear-gradient(#dedede 0,#e9e9e9 2px,#f1f1f1 6px,#f5f5f5 12px,#f5f5f5 21px,#ededed 23px,#e6e6e6 24px)"></div>
<div class="a" style="left:15.0px;top:787.3px;width:6.0px;height:21.2px;background:#634f74"></div>
<svg style="left:57px;top:790px" width="11" height="16" viewBox="0 0 11 16"><path d="M1.5 1.5 L9.5 7.5 L1.5 13.5Z" fill="#111" stroke="#111" stroke-width="1.6" stroke-linejoin="round"/></svg>
<div class="t" style="left:82.5px;top:785.76px;font-size:24.50px;font-weight:700;color:#333;">Add new integrations</div>
<svg style="left:511px;top:782px" width="32" height="32" viewBox="0 0 32 32"><circle cx="16" cy="16" r="12.5" fill="none" stroke="#e2e2e2" stroke-width="7"/><circle cx="16" cy="16" r="12.5" fill="none" stroke="#84b94a" stroke-width="7" stroke-dasharray="48.69 78.54" transform="rotate(-90 16 16)"/></svg>
<div class="t" style="left:551.0px;top:786.13px;font-size:23.00px;font-weight:400;color:#333;">62%</div>
<div class="a" style="left:1646.0px;top:72.0px;width:2.0px;height:730.0px;background:#e9e9e9"></div>
<div class="a" style="left:1675.5px;top:0.0px;width:2.0px;height:758.0px;background:#e6e6e6"></div>
<div class="a" style="left:1684.0px;top:6.0px;width:16.0px;height:533.0px;background:#c1c1c1;border-radius:8px"></div>
<svg style="left:1677px;top:758px" width="26" height="26" viewBox="0 0 26 26"><path d="M2 22 L22 2 M8 24 L24 8" stroke="#999" stroke-width="2.5"/></svg>
</div>
<div class="a" style="left:1791px;top:429px;width:1210px;height:678px;background:#fff;border:2px solid #e2e2e2;border-radius:10px"></div>
<div class="t" style="left:1812.5px;top:445.88px;font-size:33.21px;font-weight:400;color:#333;">Goal status</div>
<div class="a" style="left:1793px;top:496px;width:1206px;height:2px;background:#d6d6d6"></div>
<div class="t" style="left:1829.0px;top:511.41px;font-size:24.33px;font-weight:400;color:#666;">Goal name</div>
<div class="t" style="left:2223.0px;top:510.68px;font-size:25.18px;font-weight:400;color:#666;">Goal success metric</div>
<div class="t" style="left:2586.0px;top:510.86px;font-size:24.97px;font-weight:400;color:#666;">Goal status</div>
<svg style="left:1828px;top:560.0px" width="27" height="26" viewBox="0 0 27 26"><path d="M2.3 24.5 V2.5 Q7 0.5 12 2.5 T24.5 2.5 V15.5 Q19.5 17.5 14.5 15.5 T2.3 15.5" fill="none" stroke="#3a70b9" stroke-width="2.4" stroke-linejoin="round" stroke-linecap="round"/></svg>
<div class="t" style="left:1869.5px;top:563.37px;font-size:25.55px;font-weight:400;color:#3670b8;">Expand internationally</div>
<div class="t" style="left:2223.5px;top:563.24px;font-size:25.70px;font-weight:400;color:#333;">+3 new global markets</div>
<div class="a" style="left:2589px;top:562.5px;width:128px;height:32px;border-radius:8px;background:#dfe9d2"></div>
<div class="t" style="left:2604.5px;top:566.07px;font-size:25.20px;font-weight:400;color:#333;">On track</div>
<svg style="left:1828px;top:616.9px" width="27" height="26" viewBox="0 0 27 26"><path d="M2.3 24.5 V2.5 Q7 0.5 12 2.5 T24.5 2.5 V15.5 Q19.5 17.5 14.5 15.5 T2.3 15.5" fill="none" stroke="#3a70b9" stroke-width="2.4" stroke-linejoin="round" stroke-linecap="round"/></svg>
<div class="t" style="left:1869.5px;top:620.17px;font-size:25.66px;font-weight:400;color:#3670b8;">Increase paid subscriptions</div>
<div class="t" style="left:2223.5px;top:622.19px;font-size:23.29px;font-weight:400;color:#333;">+15% MRR</div>
<div class="a" style="left:2589px;top:619.4px;width:202.5px;height:32px;border-radius:8px;background:#fcf2d7"></div>
<div class="t" style="left:2604.5px;top:622.97px;font-size:25.20px;font-weight:400;color:#333;">Some progress</div>
<svg style="left:1828px;top:673.8px" width="27" height="26" viewBox="0 0 27 26"><path d="M2.3 24.5 V2.5 Q7 0.5 12 2.5 T24.5 2.5 V15.5 Q19.5 17.5 14.5 15.5 T2.3 15.5" fill="none" stroke="#3a70b9" stroke-width="2.4" stroke-linejoin="round" stroke-linecap="round"/></svg>
<div class="t" style="left:1869.5px;top:676.87px;font-size:25.91px;font-weight:400;color:#3670b8;">Largest partner ecosystem</div>
<div class="t" style="left:2223.5px;top:677.06px;font-size:25.68px;font-weight:400;color:#333;">+100 partners</div>
<div class="a" style="left:2589px;top:676.3px;width:162px;height:32px;border-radius:8px;background:#e2ecf8"></div>
<div class="t" style="left:2604.5px;top:679.87px;font-size:25.20px;font-weight:400;color:#333;">Not started</div>
<svg style="left:1828px;top:730.7px" width="27" height="26" viewBox="0 0 27 26"><path d="M2.3 24.5 V2.5 Q7 0.5 12 2.5 T24.5 2.5 V15.5 Q19.5 17.5 14.5 15.5 T2.3 15.5" fill="none" stroke="#3a70b9" stroke-width="2.4" stroke-linejoin="round" stroke-linecap="round"/></svg>
<div class="t" style="left:1869.5px;top:733.78px;font-size:25.89px;font-weight:400;color:#3670b8;">Top rated social fitness app</div>
<div class="t" style="left:2223.5px;top:734.23px;font-size:25.37px;font-weight:400;color:#333;">Market share 50% or greater</div>
<div class="a" style="left:2589px;top:733.2px;width:202.5px;height:32px;border-radius:8px;background:#fcf2d7"></div>
<div class="t" style="left:2604.5px;top:736.77px;font-size:25.20px;font-weight:400;color:#333;">Some progress</div>
<svg style="left:1828px;top:787.6px" width="27" height="26" viewBox="0 0 27 26"><path d="M2.3 24.5 V2.5 Q7 0.5 12 2.5 T24.5 2.5 V15.5 Q19.5 17.5 14.5 15.5 T2.3 15.5" fill="none" stroke="#3a70b9" stroke-width="2.4" stroke-linejoin="round" stroke-linecap="round"/></svg>
<div class="t" style="left:1869.5px;top:791.39px;font-size:25.06px;font-weight:400;color:#3670b8;">Triple revenue YoY</div>
<div class="t" style="left:2223.5px;top:791.12px;font-size:25.38px;font-weight:400;color:#333;">+$100M revenue</div>
<div class="a" style="left:2589px;top:790.1px;width:128px;height:32px;border-radius:8px;background:#dfe9d2"></div>
<div class="t" style="left:2604.5px;top:793.67px;font-size:25.20px;font-weight:400;color:#333;">On track</div>
<div class="a" style="left:1791px;top:1149px;width:1210px;height:900px;background:#fff;border:2px solid #e2e2e2;border-radius:10px"></div>
<div class="t" style="left:1813.5px;top:1164.48px;font-size:34.64px;font-weight:400;color:#333;">Initiatives budget list report</div>
<div class="a" style="left:1793px;top:1216px;width:1206px;height:2px;background:#d6d6d6"></div>
<div class="a" style="left:2969px;top:1218px;width:30px;height:702px;background:#fafafa;border-left:2px solid #ececec"></div>
<div class="a" style="left:2978.5px;top:1224.4px;width:15.5px;height:760px;background:#c1c1c1;border-radius:8px"></div>
<div class="clip" style="left:1793px;top:1218px;width:1176px;height:702px">
<div class="t" style="left:36.0px;top:12.39px;font-size:25.17px;font-weight:400;color:#666;">Initiative name</div>
<div class="t" style="left:240.5px;top:11.65px;font-size:26.05px;font-weight:400;color:#666;">Initiative start date</div>
<div class="t" style="left:493.5px;top:11.78px;font-size:25.90px;font-weight:400;color:#666;">Initiative end date</div>
<div class="t" style="left:736.0px;top:11.79px;font-size:25.88px;font-weight:400;color:#666;">Initiative status</div>
<div class="t" style="left:983.0px;top:12.54px;font-size:25.00px;font-weight:400;color:#666;">Initiatives budget</div>
<svg style="left:36px;top:63.5px" width="28" height="22" viewBox="0 0 28 22"><circle cx="13.5" cy="4.3" r="3.2" fill="none" stroke="#3670b8" stroke-width="2.3"/><path d="M13.5 7.5 V11 M5.5 15 V11.2 H21.5 V15 M13.5 11 V15" fill="none" stroke="#3670b8" stroke-width="2.3"/><circle cx="5.2" cy="17.6" r="3.2" fill="none" stroke="#3670b8" stroke-width="2.3"/><circle cx="13.5" cy="17.6" r="3.2" fill="none" stroke="#3670b8" stroke-width="2.3"/><circle cx="21.8" cy="17.6" r="3.2" fill="none" stroke="#3670b8" stroke-width="2.3"/></svg>
<div class="t" style="left:72.5px;top:64.17px;font-size:25.20px;font-weight:400;color:#3670b8;">Optimize</div>
<div class="t" style="left:36.0px;top:96.17px;font-size:25.20px;font-weight:400;color:#3670b8;">app</div>
<div class="t" style="left:36.0px;top:128.17px;font-size:25.20px;font-weight:400;color:#3670b8;">performance</div>
<div class="t" style="left:240.5px;top:64.87px;font-size:24.37px;font-weight:400;color:#333;">Jan 17, 2024</div>
<div class="t" style="left:493.5px;top:63.79px;font-size:25.65px;font-weight:400;color:#333;">Apr 26, 2024</div>
<div class="a" style="left:739px;top:64.0px;width:128px;height:32px;border-radius:8px;background:#dfe9d2"></div>
<div class="t" style="left:755.0px;top:67.57px;font-size:25.20px;font-weight:400;color:#333;">On track</div>
<div class="t" style="left:983.0px;top:64.17px;font-size:25.20px;font-weight:400;color:#333;">$10,000.00</div>
<svg style="left:36px;top:180.0px" width="28" height="22" viewBox="0 0 28 22"><circle cx="13.5" cy="4.3" r="3.2" fill="none" stroke="#3670b8" stroke-width="2.3"/><path d="M13.5 7.5 V11 M5.5 15 V11.2 H21.5 V15 M13.5 11 V15" fill="none" stroke="#3670b8" stroke-width="2.3"/><circle cx="5.2" cy="17.6" r="3.2" fill="none" stroke="#3670b8" stroke-width="2.3"/><circle cx="13.5" cy="17.6" r="3.2" fill="none" stroke="#3670b8" stroke-width="2.3"/><circle cx="21.8" cy="17.6" r="3.2" fill="none" stroke="#3670b8" stroke-width="2.3"/></svg>
<div class="t" style="left:72.5px;top:180.67px;font-size:25.20px;font-weight:400;color:#3670b8;">Increase</div>
<div class="t" style="left:36.0px;top:212.67px;font-size:25.20px;font-weight:400;color:#3670b8;">partner</div>
<div class="t" style="left:36.0px;top:244.67px;font-size:25.20px;font-weight:400;color:#3670b8;">events</div>
<div class="t" style="left:240.5px;top:180.27px;font-size:25.66px;font-weight:400;color:#333;">Apr 4, 2024</div>
<div class="t" style="left:493.5px;top:180.33px;font-size:25.60px;font-weight:400;color:#333;">May 20, 2024</div>
<div class="a" style="left:739px;top:180.5px;width:202.5px;height:32px;border-radius:8px;background:#fcf2d7"></div>
<div class="t" style="left:755.0px;top:184.07px;font-size:25.20px;font-weight:400;color:#333;">Some progress</div>
<div class="t" style="left:983.0px;top:180.67px;font-size:25.20px;font-weight:400;color:#333;">$10,000.00</div>
<svg style="left:36px;top:295.3px" width="28" height="22" viewBox="0 0 28 22"><circle cx="13.5" cy="4.3" r="3.2" fill="none" stroke="#3670b8" stroke-width="2.3"/><path d="M13.5 7.5 V11 M5.5 15 V11.2 H21.5 V15 M13.5 11 V15" fill="none" stroke="#3670b8" stroke-width="2.3"/><circle cx="5.2" cy="17.6" r="3.2" fill="none" stroke="#3670b8" stroke-width="2.3"/><circle cx="13.5" cy="17.6" r="3.2" fill="none" stroke="#3670b8" stroke-width="2.3"/><circle cx="21.8" cy="17.6" r="3.2" fill="none" stroke="#3670b8" stroke-width="2.3"/></svg>
<div class="t" style="left:72.5px;top:295.97px;font-size:25.20px;font-weight:400;color:#3670b8;">Enhance</div>
<div class="t" style="left:36.0px;top:327.97px;font-size:25.20px;font-weight:400;color:#3670b8;">activity</div>
<div class="t" style="left:36.0px;top:359.97px;font-size:25.20px;font-weight:400;color:#3670b8;">tracking</div>
<div class="t" style="left:240.5px;top:295.51px;font-size:25.74px;font-weight:400;color:#333;">Mar 22, 2024</div>
<div class="t" style="left:493.5px;top:296.11px;font-size:25.03px;font-weight:400;color:#333;">May 10, 2024</div>
<div class="a" style="left:739px;top:295.8px;width:202.5px;height:32px;border-radius:8px;background:#fcf2d7"></div>
<div class="t" style="left:755.0px;top:299.37px;font-size:25.20px;font-weight:400;color:#333;">Some progress</div>
<div class="t" style="left:983.0px;top:295.97px;font-size:25.20px;font-weight:400;color:#333;">$5,000.00</div>
<svg style="left:36px;top:411.7px" width="28" height="22" viewBox="0 0 28 22"><circle cx="13.5" cy="4.3" r="3.2" fill="none" stroke="#3670b8" stroke-width="2.3"/><path d="M13.5 7.5 V11 M5.5 15 V11.2 H21.5 V15 M13.5 11 V15" fill="none" stroke="#3670b8" stroke-width="2.3"/><circle cx="5.2" cy="17.6" r="3.2" fill="none" stroke="#3670b8" stroke-width="2.3"/><circle cx="13.5" cy="17.6" r="3.2" fill="none" stroke="#3670b8" stroke-width="2.3"/><circle cx="21.8" cy="17.6" r="3.2" fill="none" stroke="#3670b8" stroke-width="2.3"/></svg>
<div class="t" style="left:36.0px;top:444.37px;font-size:25.20px;font-weight:400;color:#3670b8;">Localization</div>
<div class="t" style="left:240.5px;top:412.01px;font-size:25.63px;font-weight:400;color:#333;">Jan 29, 2024</div>
<div class="t" style="left:493.5px;top:411.92px;font-size:25.73px;font-weight:400;color:#333;">Jun 28, 2024</div>
<div class="a" style="left:739px;top:412.2px;width:202.5px;height:32px;border-radius:8px;background:#fcf2d7"></div>
<div class="t" style="left:755.0px;top:415.77px;font-size:25.20px;font-weight:400;color:#333;">Some progress</div>
<div class="t" style="left:983.0px;top:412.37px;font-size:25.20px;font-weight:400;color:#333;">$5,000.00</div>
<svg style="left:36px;top:495.5px" width="28" height="22" viewBox="0 0 28 22"><circle cx="13.5" cy="4.3" r="3.2" fill="none" stroke="#3670b8" stroke-width="2.3"/><path d="M13.5 7.5 V11 M5.5 15 V11.2 H21.5 V15 M13.5 11 V15" fill="none" stroke="#3670b8" stroke-width="2.3"/><circle cx="5.2" cy="17.6" r="3.2" fill="none" stroke="#3670b8" stroke-width="2.3"/><circle cx="13.5" cy="17.6" r="3.2" fill="none" stroke="#3670b8" stroke-width="2.3"/><circle cx="21.8" cy="17.6" r="3.2" fill="none" stroke="#3670b8" stroke-width="2.3"/></svg>
<div class="t" style="left:72.5px;top:496.17px;font-size:25.20px;font-weight:400;color:#3670b8;">More</div>
<div class="t" style="left:36.0px;top:528.17px;font-size:25.20px;font-weight:400;color:#3670b8;">partner</div>
<div class="t" style="left:36.0px;top:560.17px;font-size:25.20px;font-weight:400;color:#3670b8;">support</div>
<div class="t" style="left:240.5px;top:496.01px;font-size:25.38px;font-weight:400;color:#333;">Feb 29, 2024</div>
<div class="t" style="left:493.5px;top:496.21px;font-size:25.15px;font-weight:400;color:#333;">Mar 15, 2024</div>
<div class="a" style="left:739px;top:496.0px;width:128px;height:32px;border-radius:8px;background:#dfe9d2"></div>
<div class="t" style="left:755.0px;top:499.57px;font-size:25.20px;font-weight:400;color:#333;">On track</div>
<div class="t" style="left:983.0px;top:496.17px;font-size:25.20px;font-weight:400;color:#333;">$2,000.00</div>
<svg style="left:36px;top:611.0px" width="28" height="22" viewBox="0 0 28 22"><circle cx="13.5" cy="4.3" r="3.2" fill="none" stroke="#3670b8" stroke-width="2.3"/><path d="M13.5 7.5 V11 M5.5 15 V11.2 H21.5 V15 M13.5 11 V15" fill="none" stroke="#3670b8" stroke-width="2.3"/><circle cx="5.2" cy="17.6" r="3.2" fill="none" stroke="#3670b8" stroke-width="2.3"/><circle cx="13.5" cy="17.6" r="3.2" fill="none" stroke="#3670b8" stroke-width="2.3"/><circle cx="21.8" cy="17.6" r="3.2" fill="none" stroke="#3670b8" stroke-width="2.3"/></svg>
<div class="t" style="left:72.5px;top:611.67px;font-size:25.20px;font-weight:400;color:#3670b8;">Premium</div>
<div class="t" style="left:36.0px;top:643.67px;font-size:25.20px;font-weight:400;color:#3670b8;">plan updates</div>
<div class="t" style="left:240.5px;top:612.06px;font-size:24.74px;font-weight:400;color:#333;">Feb 15, 2024</div>
<div class="t" style="left:493.5px;top:611.22px;font-size:25.73px;font-weight:400;color:#333;">Jun 30, 2024</div>
<div class="a" style="left:739px;top:611.5px;width:202.5px;height:32px;border-radius:8px;background:#fcf2d7"></div>
<div class="t" style="left:755.0px;top:615.07px;font-size:25.20px;font-weight:400;color:#333;">Some progress</div>
<div class="t" style="left:983.0px;top:611.67px;font-size:25.20px;font-weight:400;color:#333;">$1,000.00</div>
<svg style="left:36px;top:695.0px" width="28" height="22" viewBox="0 0 28 22"><circle cx="13.5" cy="4.3" r="3.2" fill="none" stroke="#3670b8" stroke-width="2.3"/><path d="M13.5 7.5 V11 M5.5 15 V11.2 H21.5 V15 M13.5 11 V15" fill="none" stroke="#3670b8" stroke-width="2.3"/><circle cx="5.2" cy="17.6" r="3.2" fill="none" stroke="#3670b8" stroke-width="2.3"/><circle cx="13.5" cy="17.6" r="3.2" fill="none" stroke="#3670b8" stroke-width="2.3"/><circle cx="21.8" cy="17.6" r="3.2" fill="none" stroke="#3670b8" stroke-width="2.3"/></svg>
<div class="t" style="left:72.5px;top:695.67px;font-size:25.20px;font-weight:400;color:#3670b8;">Improve</div>
<div class="t" style="left:36.0px;top:727.67px;font-size:25.20px;font-weight:400;color:#3670b8;">proactive</div>
<div class="t" style="left:36.0px;top:759.67px;font-size:25.20px;font-weight:400;color:#3670b8;">notifications</div>
<div class="t" style="left:240.5px;top:695.67px;font-size:25.20px;font-weight:400;color:#333;">Jan 24, 2024</div>
<div class="t" style="left:493.5px;top:695.27px;font-size:25.66px;font-weight:400;color:#333;">Apr 4, 2024</div>
<div class="a" style="left:739px;top:695.5px;width:202.5px;height:32px;border-radius:8px;background:#fcf2d7"></div>
<div class="t" style="left:755.0px;top:699.07px;font-size:25.20px;font-weight:400;color:#333;">Some progress</div>
<div class="t" style="left:983.0px;top:695.67px;font-size:25.20px;font-weight:400;color:#333;">$1,000.00</div>
</div>
<div class="a" style="left:41px;top:1329px;width:1709px;height:800px;background:#fff;border:2px solid #e2e2e2;border-radius:10px"></div>
<div class="t" style="left:62.0px;top:1344.93px;font-size:34.11px;font-weight:400;color:#333;">Features planned by initiative chart</div>
<div class="a" style="left:43px;top:1396px;width:1705px;height:2px;background:#d6d6d6"></div>
<div class="clip" style="left:43px;top:1398px;width:1705px;height:522px">
<svg style="left:0;top:0" width="1705" height="522"><path d="M673.01 226.05 A314.5 314.5 0 0 1 822.36 171.25 L834.43 296.67 A188.5 188.5 0 0 0 744.92 329.51Z" fill="#a3c6d8"/><path d="M822.36 171.25 A314.5 314.5 0 0 1 978.91 196.32 L928.27 311.70 A188.5 188.5 0 0 0 834.43 296.67Z" fill="#97bfc0"/><path d="M978.91 196.32 A314.5 314.5 0 0 1 1078.16 265.24 L987.75 353.00 A188.5 188.5 0 0 0 928.27 311.70Z" fill="#f5d4a6"/><path d="M1078.16 265.24 A314.5 314.5 0 0 1 1126.23 329.43 L1016.56 391.48 A188.5 188.5 0 0 0 987.75 353.00Z" fill="#4d7e82"/><path d="M1126.23 329.43 A314.5 314.5 0 0 1 1156.71 404.49 L1034.83 436.47 A188.5 188.5 0 0 0 1016.56 391.48Z" fill="#9d6071"/><path d="M1156.71 404.49 A314.5 314.5 0 0 1 1167.00 484.30 L1041.00 484.30 A188.5 188.5 0 0 0 1034.83 436.47Z" fill="#634f74"/><path d="M1167.00 484.30 A314.5 314.5 0 0 1 1103.67 673.57 L1003.04 597.74 A188.5 188.5 0 0 0 1041.00 484.30Z" fill="#94839e"/><path d="M1103.67 673.57 A314.5 314.5 0 0 1 744.93 779.83 L788.03 661.43 A188.5 188.5 0 0 0 1003.04 597.74Z" fill="#a3c6d8"/><path d="M744.93 779.83 A314.5 314.5 0 0 1 543.99 423.21 L667.59 447.69 A188.5 188.5 0 0 0 788.03 661.43Z" fill="#cde19e"/><path d="M543.99 423.21 A314.5 314.5 0 0 1 673.01 226.05 L744.92 329.51 A188.5 188.5 0 0 0 667.59 447.69Z" fill="#b98e9b"/><path d="M685.0 158.0 L731.8 158.0 L743.9 186.5" fill="none" stroke="#e2e2e2" stroke-width="2"/><path d="M514.6 294.0 L561.4 294.0 L588.5 311.7" fill="none" stroke="#e2e2e2" stroke-width="2"/><path d="M954.7 141.8 L906.7 141.8 L901.4 171.3" fill="none" stroke="#e2e2e2" stroke-width="2"/><path d="M1098.6 199.0 L1050.7 199.0 L1032.9 224.6" fill="none" stroke="#e2e2e2" stroke-width="2"/><path d="M1177.9 276.8 L1128.8 276.8 L1105.8 293.9" fill="none" stroke="#e2e2e2" stroke-width="2"/><path d="M1221.3 353.6 L1173.3 353.6 L1144.8 365.7" fill="none" stroke="#e2e2e2" stroke-width="2"/><path d="M1242.6 438.9 L1191.0 438.9 L1166.2 443.2" fill="none" stroke="#e2e2e2" stroke-width="2"/></svg>
<div class="t" style="left:270.0px;top:141.14px;font-size:33.97px;font-weight:400;color:#333;">Optimize app performance</div>
<div class="t" style="left:143.5px;top:277.37px;font-size:33.35px;font-weight:400;color:#333;">Enhance social features</div>
<div class="t" style="left:968.0px;top:124.28px;font-size:34.52px;font-weight:400;color:#333;">More partner support</div>
<div class="t" style="left:1110.8px;top:181.68px;font-size:33.92px;font-weight:400;color:#333;">Increase partner events</div>
<div class="t" style="left:1190.0px;top:258.72px;font-size:34.00px;font-weight:400;color:#333;">Grow partnerships through improved</div>
<div class="t" style="left:1233.7px;top:336.61px;font-size:33.54px;font-weight:400;color:#333;">Expand global markets</div>
<div class="t" style="left:1256.5px;top:421.31px;font-size:34.24px;font-weight:400;color:#333;">Add new integrations</div>
<div class="t" style="left:756.5px;top:231.81px;font-size:32.00px;font-weight:400;color:#333;">4</div>
<div class="t" style="left:882.7px;top:218.91px;font-size:32.00px;font-weight:400;color:#333;">4</div>
<div class="t" style="left:633.5px;top:329.91px;font-size:32.00px;font-weight:400;color:#333;">6</div>
</div>
</body></html>
